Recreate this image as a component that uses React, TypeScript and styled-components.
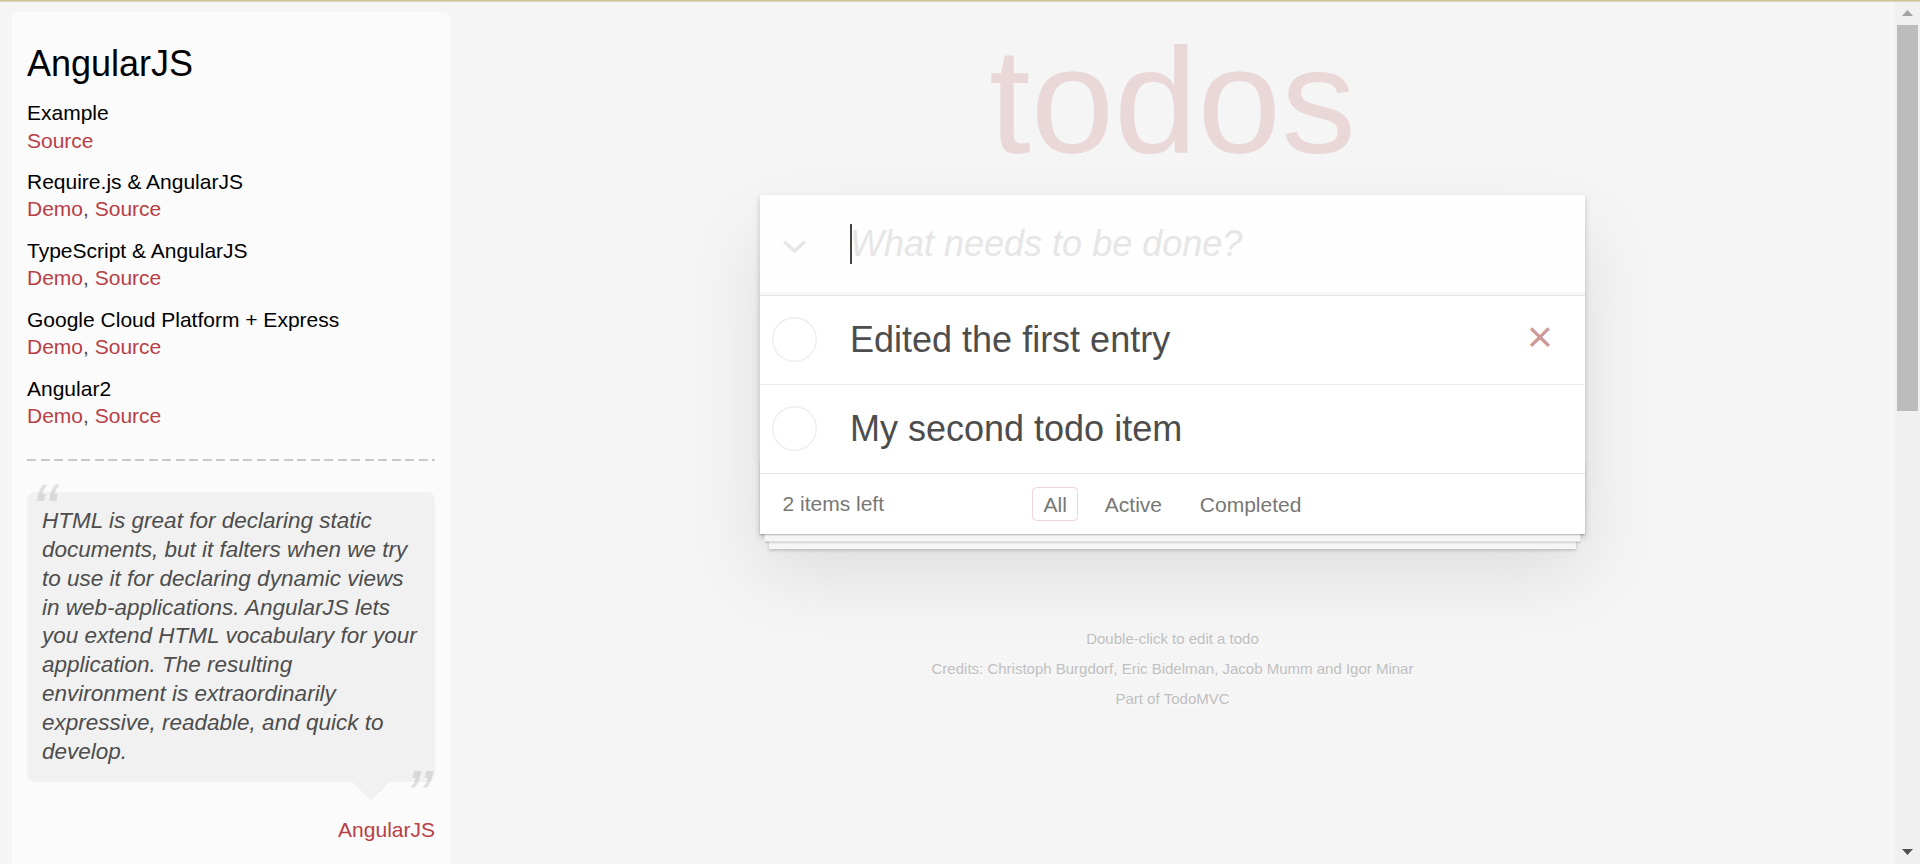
import React from "react";
import styled, { createGlobalStyle } from "styled-components";

const GlobalStyle = createGlobalStyle`
  html, body {
    margin: 0;
    padding: 0;
  }
  * {
    box-sizing: border-box;
  }
  body {
    background: #f5f5f5;
    color: #4d4d4d;
    font-family: "Liberation Sans", Arial, Helvetica, sans-serif;
    font-size: 21px;
    line-height: 29.4px;
    font-weight: 300;
    overflow: hidden;
  }
`;

const Shell = styled.div`
  position: relative;
  display: flex;
  width: 1920px;
  height: 864px;
  overflow: hidden;
  background: #f5f5f5;
`;

const TopEdge = styled.div`
  position: absolute;
  top: 0;
  left: 0;
  right: 0;
  height: 2px;
  background: linear-gradient(#c8b98c, #e6dfc8);
  z-index: 10;
`;

/* ---------- Sidebar ---------- */

const SidebarArea = styled.aside`
  flex: 0 0 450px;
  padding: 12px 0 0 12px;
`;

const Learn = styled.div`
  width: 438px;
  min-height: 1000px;
  padding: 15px 15px 0;
  border-radius: 7.5px;
  background: rgba(255, 255, 255, 0.6);
`;

const LearnTitle = styled.h3`
  margin: 15px 0;
  font-size: 36px;
  line-height: 43.2px;
  font-weight: 500;
  color: #000;
`;

const SourceName = styled.h5`
  margin: 15px 0 0;
  font-size: 21px;
  line-height: 25.2px;
  font-weight: 500;
  color: #000;
`;

const SourceLinks = styled.div`
  padding-top: 1.2px;
  line-height: 27.5px;
`;

const LearnLink = styled.a`
  color: #b83f45;
  font-weight: normal;
  text-decoration: none;
`;

const Divider = styled.hr`
  margin: 29px 0 31px;
  height: 2px;
  border: 0;
  background: repeating-linear-gradient(
    to right,
    #c9c9c9 0,
    #c9c9c9 9px,
    transparent 9px,
    transparent 13.5px
  );
`;

const Quote = styled.blockquote`
  margin: 31.2px 0 90px;
`;

const Bubble = styled.div`
  position: relative;
  padding: 15px;
  background: rgba(0, 0, 0, 0.04);
  border-radius: 7.5px;

  &::after {
    content: "";
    position: absolute;
    top: 100%;
    right: 45px;
    border: 19.5px solid transparent;
    border-top-color: rgba(0, 0, 0, 0.04);
  }
`;

const QuoteText = styled.p`
  margin: 0;
  font-size: 22.5px;
  line-height: 28.9px;
  font-style: italic;
  font-weight: 300;
  color: #4d4d4d;
  white-space: nowrap;

  &::before,
  &::after {
    position: absolute;
    font-size: 75px;
    line-height: 97.5px;
    opacity: 0.15;
  }
  &::before {
    content: "“";
    top: -30px;
    left: 4.5px;
  }
  &::after {
    content: "”";
    bottom: -63px;
    right: 4.5px;
  }
`;

const QuoteSource = styled.footer`
  margin-top: 33.5px;
  text-align: right;
  line-height: 28.9px;
`;

/* ---------- Main todo app ---------- */

const Main = styled.main`
  flex: 1;
  display: flex;
  justify-content: center;
`;

const Column = styled.div`
  width: 825px;
  padding-top: 25.5px;
`;

const Title = styled.h1`
  margin: 0 0 19.5px;
  font-size: 150px;
  line-height: 150px;
  font-weight: 100;
  text-align: center;
  color: rgba(175, 47, 47, 0.15);
  text-rendering: optimizeLegibility;
`;

const TodoApp = styled.section`
  position: relative;
  background: #fff;
  box-shadow: 0 3px 6px 0 rgba(0, 0, 0, 0.2), 0 37.5px 75px 0 rgba(0, 0, 0, 0.1);
`;

const Header = styled.header`
  display: flex;
  height: 99.6px;
  background: rgba(0, 0, 0, 0.003);
  box-shadow: inset 0 -3px 1.5px rgba(0, 0, 0, 0.03);
`;

const ToggleAll = styled.button`
  flex: 0 0 90px;
  display: flex;
  align-items: flex-start;
  padding: 45px 0 0 22px;
  border: 0;
  background: none;
`;

const InputWrap = styled.div`
  position: relative;
  flex: 1;
`;

const NewTodo = styled.input`
  width: 100%;
  height: 100%;
  margin: 0;
  padding: 24px 24px 25.2px 0;
  border: 0;
  background: transparent;
  font-family: inherit;
  font-size: 36px;
  line-height: 50.4px;
  font-weight: 300;
  color: #4d4d4d;
  outline: none;
  caret-color: transparent;

  &::placeholder {
    font-style: italic;
    font-weight: 300;
    color: #e6e6e6;
  }
`;

const Caret = styled.span`
  position: absolute;
  left: 0;
  top: 29px;
  width: 2px;
  height: 40px;
  background: #444;
`;

const TodoList = styled.ul`
  position: relative;
  z-index: 2;
  margin: 0;
  padding: 0;
  list-style: none;
  border-top: 1px solid #e6e6e6;
`;

const TodoItem = styled.li`
  display: flex;
  align-items: center;
  font-size: 36px;
  border-bottom: 1px solid #ededed;

  &:last-child {
    border-bottom: none;
  }
`;

const ToggleBox = styled.span`
  flex: 0 0 90px;
  display: flex;
  align-items: center;
  padding-left: 12px;
`;

const TodoLabel = styled.label`
  flex: 1;
  display: block;
  padding: 22.5px 0;
  line-height: 43.2px;
  color: #4d4d4d;
  word-break: break-all;
`;

const Destroy = styled.button`
  align-self: stretch;
  display: flex;
  align-items: center;
  justify-content: center;
  width: 60px;
  margin: 0 15px 0 0;
  padding: 0 0 6px;
  border: 0;
  background: none;
  font-family: inherit;
  font-size: 45px;
  line-height: 51.7px;
  color: #cc9a9a;
`;

const Footer = styled.footer`
  position: relative;
  display: grid;
  grid-template-columns: 1fr auto 1fr;
  align-items: start;
  height: 61px;
  padding: 15px 22.5px;
  border-top: 1px solid #e6e6e6;
  color: #777;
  font-size: 21px;
  line-height: 29.4px;

  &::before {
    content: "";
    position: absolute;
    left: 0;
    right: 0;
    bottom: 0;
    height: 75px;
    overflow: hidden;
    pointer-events: none;
    box-shadow: 0 1.5px 1.5px rgba(0, 0, 0, 0.2),
      0 12px 0 -4.5px #f6f6f6,
      0 13.5px 1.5px -4.5px rgba(0, 0, 0, 0.2),
      0 24px 0 -9px #f6f6f6,
      0 25.5px 3px -9px rgba(0, 0, 0, 0.2);
  }
`;

const Count = styled.span`
  justify-self: start;
  text-align: left;
  white-space: nowrap;
`;

const Filters = styled.ul`
  margin: 0;
  padding: 0;
  list-style: none;
  text-align: center;
  white-space: nowrap;
`;

const FilterItem = styled.li`
  display: inline;
`;

const FilterLink = styled.a<{ $selected?: boolean }>`
  margin: 4.5px;
  padding: 4.5px 10.5px;
  color: inherit;
  text-decoration: none;
  border: 1px solid ${(p) => (p.$selected ? "rgba(175, 47, 47, 0.2)" : "transparent")};
  border-radius: 4.5px;
`;

const Info = styled.footer`
  display: flex;
  flex-direction: column;
  gap: 15px;
  margin-top: 96.8px;
  color: #bfbfbf;
  font-size: 15px;
  text-align: center;
  text-shadow: 0 1.5px 0 rgba(255, 255, 255, 0.5);
`;

const InfoLine = styled.p`
  margin: 0;
  line-height: 15px;
`;

const InfoLink = styled.a`
  color: inherit;
  text-decoration: none;
  font-weight: 400;
`;

/* ---------- Scrollbar ---------- */

const ScrollBar = styled.div`
  flex: 0 0 25px;
  display: flex;
  flex-direction: column;
  background: #f0f0f0;
`;

const ScrollArrow = styled.div`
  flex: 0 0 25px;
  display: flex;
  align-items: center;
  justify-content: center;
`;

const ScrollTrack = styled.div`
  flex: 1;
  padding: 0 2px;
`;

const ScrollThumb = styled.div`
  height: 386px;
  background: #bcbcbc;
`;

const sources: { name: string; demo: boolean }[] = [
  { name: "Example", demo: false },
  { name: "Require.js & AngularJS", demo: true },
  { name: "TypeScript & AngularJS", demo: true },
  { name: "Google Cloud Platform + Express", demo: true },
  { name: "Angular2", demo: true },
];

const todos = [
  { title: "Edited the first entry", hovered: true },
  { title: "My second todo item", hovered: false },
];

export default function App() {
  return (
    <>
      <GlobalStyle />
      <Shell>
        <TopEdge />
        <SidebarArea>
          <Learn>
            <header>
              <LearnTitle>AngularJS</LearnTitle>
              {sources.map((s) => (
                <React.Fragment key={s.name}>
                  <SourceName>{s.name}</SourceName>
                  <SourceLinks>
                    {s.demo ? (
                      <>
                        <LearnLink href="#">Demo</LearnLink>,{" "}
                      </>
                    ) : null}
                    <LearnLink href="#">Source</LearnLink>
                  </SourceLinks>
                </React.Fragment>
              ))}
            </header>
            <Divider />
            <Quote>
              <Bubble>
                <QuoteText>
                  HTML is great for declaring static
                  <br />
                  documents, but it falters when we try
                  <br />
                  to use it for declaring dynamic views
                  <br />
                  in web-applications. AngularJS lets
                  <br />
                  you extend HTML vocabulary for your
                  <br />
                  application. The resulting
                  <br />
                  environment is extraordinarily
                  <br />
                  expressive, readable, and quick to
                  <br />
                  develop.
                </QuoteText>
              </Bubble>
              <QuoteSource>
                <LearnLink href="#">AngularJS</LearnLink>
              </QuoteSource>
            </Quote>
          </Learn>
        </SidebarArea>

        <Main>
          <Column>
            <Title>todos</Title>
            <TodoApp>
              <Header>
                <ToggleAll aria-label="Mark all as complete">
                  <svg width="25" height="13" viewBox="0 0 25 13">
                    <polyline
                      points="2.2,1.8 12.5,11 22.8,1.8"
                      fill="none"
                      stroke="#e6e6e6"
                      strokeWidth="3.4"
                    />
                  </svg>
                </ToggleAll>
                <InputWrap>
                  <NewTodo placeholder="What needs to be done?" />
                  <Caret />
                </InputWrap>
              </Header>
              <TodoList>
                {todos.map((t) => (
                  <TodoItem key={t.title}>
                    <ToggleBox>
                      <svg width="45" height="45" viewBox="0 0 45 45">
                        <circle
                          cx="22.5"
                          cy="22.5"
                          r="21.8"
                          fill="none"
                          stroke="#ededed"
                          strokeWidth="1.35"
                        />
                      </svg>
                    </ToggleBox>
                    <TodoLabel>{t.title}</TodoLabel>
                    {t.hovered ? <Destroy aria-label="Delete">×</Destroy> : null}
                  </TodoItem>
                ))}
              </TodoList>
              <Footer>
                <Count>2 items left</Count>
                <Filters>
                  <FilterItem>
                    <FilterLink href="#" $selected>
                      All
                    </FilterLink>
                  </FilterItem>{" "}
                  <FilterItem>
                    <FilterLink href="#">Active</FilterLink>
                  </FilterItem>{" "}
                  <FilterItem>
                    <FilterLink href="#">Completed</FilterLink>
                  </FilterItem>
                </Filters>
                <span />
              </Footer>
            </TodoApp>
            <Info>
              <InfoLine>Double-click to edit a todo</InfoLine>
              <InfoLine>
                Credits: <InfoLink href="#">Christoph Burgdorf</InfoLink>,{" "}
                <InfoLink href="#">Eric Bidelman</InfoLink>,{" "}
                <InfoLink href="#">Jacob Mumm</InfoLink> and{" "}
                <InfoLink href="#">Igor Minar</InfoLink>
              </InfoLine>
              <InfoLine>
                Part of <InfoLink href="#">TodoMVC</InfoLink>
              </InfoLine>
            </Info>
          </Column>
        </Main>

        <ScrollBar>
          <ScrollArrow>
            <svg width="11" height="6" viewBox="0 0 11 6">
              <polygon points="0,6 5.5,0 11,6" fill="#a3a3a3" />
            </svg>
          </ScrollArrow>
          <ScrollTrack>
            <ScrollThumb />
          </ScrollTrack>
          <ScrollArrow>
            <svg width="11" height="6" viewBox="0 0 11 6">
              <polygon points="0,0 11,0 5.5,6" fill="#505050" />
            </svg>
          </ScrollArrow>
        </ScrollBar>
      </Shell>
    </>
  );
}
